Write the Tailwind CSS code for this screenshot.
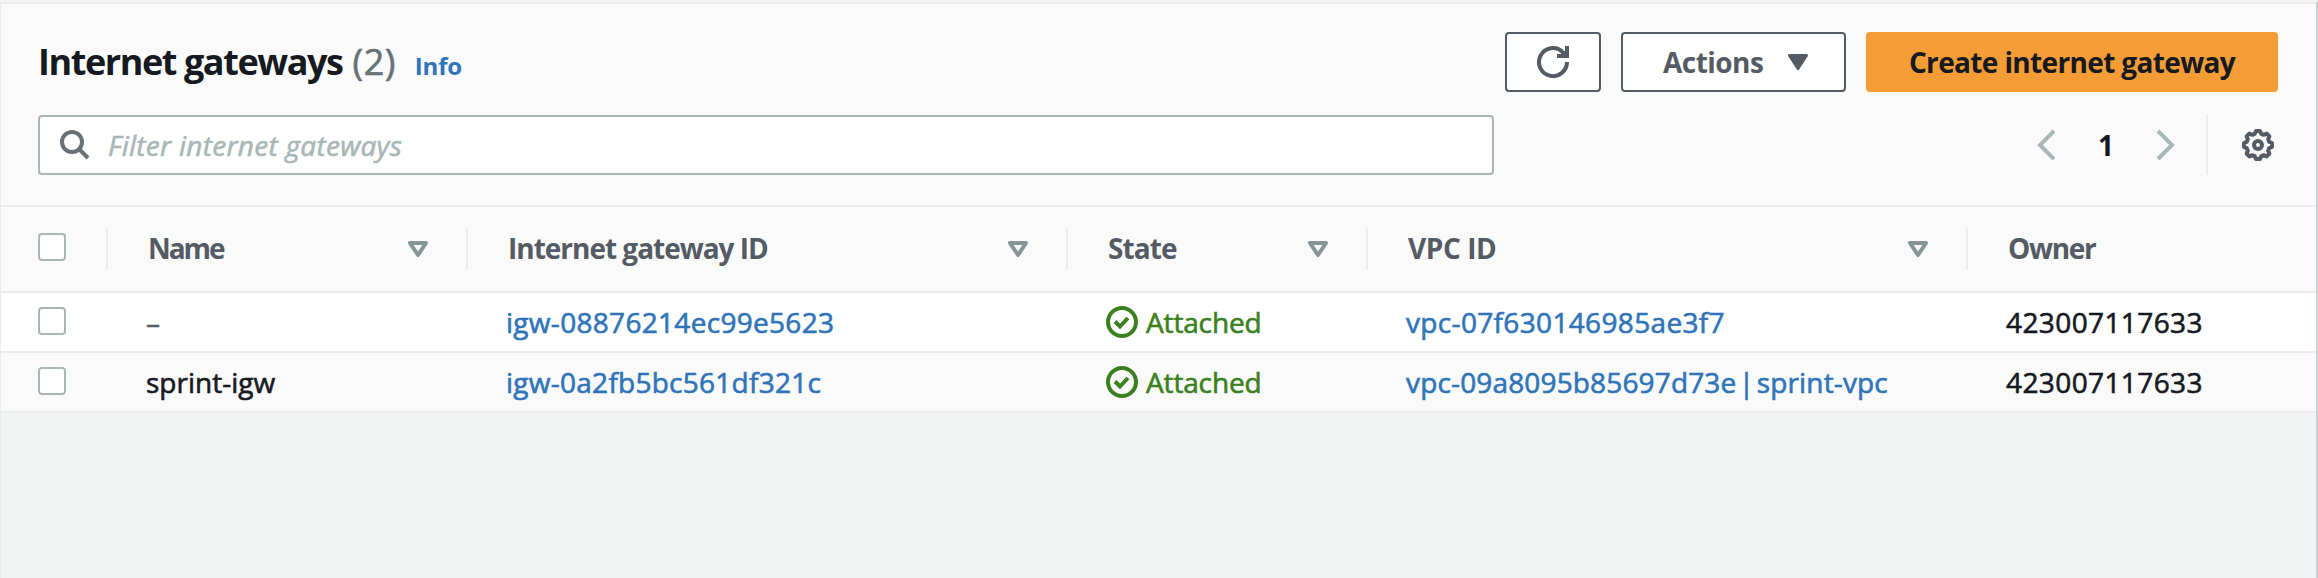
<!DOCTYPE html>
<html lang="en">
<head>
<meta charset="utf-8">
<title>Internet gateways</title>
<script src="https://cdn.jsdelivr.net/npm/@tailwindcss/browser@4"></script>
</head>
<body class="h-[578px] overflow-hidden bg-[#f2f3f3] pt-0.5 font-['Open_Sans',sans-serif] text-[28px] leading-[40px] text-[#16191f]">
<svg class="hidden">
  <symbol id="sort" viewBox="0 0 20 16"><path d="M2 2h16l-8 12z" fill="none" stroke="currentColor" stroke-width="4" stroke-linejoin="round"/></symbol>
  <symbol id="ok" viewBox="0 0 32 32"><circle cx="16" cy="16" r="14" fill="none" stroke="currentColor" stroke-width="4"/><path d="M9 15.500l5 5 8-8.500" fill="none" stroke="currentColor" stroke-width="4"/></symbol>
</svg>
<div class="flex h-[576px] flex-col border-r-2 border-l border-r-[#c9d0d1] border-l-[#eaeded]">
  <header class="flex h-[205px] flex-col border-y-2 border-[#eaeded] bg-[#fafafa] pr-[38px] pl-[37px]">
    <div class="mt-7 flex h-[60px] items-center justify-between">
      <div class="-mt-px flex items-baseline">
        <h1 class="text-[36px] leading-[44px] font-bold tracking-[-1.42px]">Internet gateways</h1>
        <span class="ml-[10px] text-[36px] leading-[44px] tracking-[0.5px] text-[#687078] [-webkit-text-stroke:0.6px]">(2)</span>
        <a class="ml-[19px] text-2xl font-bold tracking-[-0.2px] text-[#2f74b9]">Info</a>
      </div>
      <div class="flex gap-5 font-bold">
        <button class="flex h-[60px] w-24 items-center justify-center rounded-[4px] border-2 border-[#545b64] bg-white text-[#545b64]">
          <svg class="h-8 w-8" viewBox="0 0 32 32" fill="none" stroke="currentColor" stroke-width="4"><path d="M30 16a14 14 0 1 1-4.500-10.200"/><path d="M30 0v10H20" /><path d="M24 5h5v5h-5z" fill="currentColor" stroke="none"/></svg>
        </button>
        <button class="flex h-[60px] w-[225px] items-center rounded-[4px] border-2 border-[#545b64] bg-white pl-10 text-[#545b64]">
          <span class="tracking-[-0.53px]">Actions</span>
          <svg class="ml-[25px] h-4 w-5" viewBox="0 0 20 16"><path d="M1.500 1.500h17L10 14.500z" fill="currentColor" stroke="currentColor" stroke-width="3" stroke-linejoin="round"/></svg>
        </button>
        <button class="flex h-[60px] w-[412px] items-center justify-center rounded-[4px] bg-[#f49d37] tracking-[-0.64px]">Create internet gateway</button>
      </div>
    </div>
    <div class="mt-[23px] flex h-[60px] items-center">
      <div class="flex h-[60px] w-[1456px] items-center rounded-[4px] border-2 border-[#aab7b8] bg-white pl-5">
        <svg class="h-[30px] w-[30px] text-[#687078]" viewBox="0 0 30 30" fill="none" stroke="currentColor" stroke-width="4"><circle cx="12" cy="12" r="10"/><path d="M19 19l9 9"/></svg>
        <span class="ml-[18px] tracking-[0.28px] text-[#aab7b8] italic [-webkit-text-stroke:0.6px]">Filter internet gateways</span>
      </div>
      <svg class="ml-auto h-8 w-[19px] text-[#aab7b8]" viewBox="0 0 19 32" fill="none" stroke="currentColor" stroke-width="4"><path d="M18 2L4 16l14 14"/></svg>
      <span class="w-[101px] pl-px text-center font-bold">1</span>
      <svg class="h-8 w-[19px] text-[#aab7b8]" viewBox="0 0 19 32" fill="none" stroke="currentColor" stroke-width="4"><path d="M2 2l14 14L2 30"/></svg>
      <div class="ml-[31px] h-[60px] w-0.5 bg-[#eaeded]"></div>
      <svg class="mr-1 ml-[34px] h-8 w-8 text-[#545b64]" viewBox="0 0 32 32" fill="none" stroke="currentColor" stroke-width="4" stroke-linejoin="round"><circle cx="16" cy="16" r="4"/><path d="M14 2h4l1.200 2.800 2.500 1 3-1.200 2.700 2.700-1.200 3 1 2.500L30 14v4l-2.800 1.200-1 2.500 1.200 3-2.700 2.700-3-1.200-2.500 1L18 30h-4l-1.200-2.800-2.500-1-3 1.200-2.700-2.700 1.200-3-1-2.500L2 18v-4l2.800-1.200 1-2.500-1.200-3 2.700-2.700 3 1.200 2.500-1z"/></svg>
    </div>
  </header>

  <div class="flex h-[86px] shrink-0 items-center border-b-2 border-[#eaeded] bg-[#fafafa] font-bold text-[#545b64]">
    <div class="flex h-[42px] w-[107px] items-center border-r-2 border-[#eaeded] pl-[37px]"><i class="-mt-1 h-7 w-7 rounded-[4px] border-2 border-[#aab7b8] bg-white"></i></div>
    <div class="flex h-[42px] w-[360px] items-center justify-between border-r-2 border-[#eaeded] pr-[38px] pl-10"><span class="-mt-0.5 tracking-[-2.060px]">Name</span><svg class="h-4 w-5 text-[#879596]"><use href="#sort"/></svg></div>
    <div class="flex h-[42px] w-[600px] items-center justify-between border-r-2 border-[#eaeded] pr-[38px] pl-10"><span class="-mt-0.5 tracking-[-1.010px]">Internet gateway ID</span><svg class="h-4 w-5 text-[#879596]"><use href="#sort"/></svg></div>
    <div class="flex h-[42px] w-[300px] items-center justify-between border-r-2 border-[#eaeded] pr-[38px] pl-10"><span class="-mt-0.5 tracking-[-0.910px]">State</span><svg class="h-4 w-5 text-[#879596]"><use href="#sort"/></svg></div>
    <div class="flex h-[42px] w-[600px] items-center justify-between border-r-2 border-[#eaeded] pr-[38px] pl-10"><span class="-mt-0.5 tracking-[-0.430px]">VPC ID</span><svg class="h-4 w-5 text-[#879596]"><use href="#sort"/></svg></div>
    <div class="-mt-0.5 pl-10 tracking-[-1.300px]">Owner</div>
  </div>

  <div class="flex h-[60px] shrink-0 items-center border-b-2 border-[#eaeded] bg-white [-webkit-text-stroke:0.6px]">
    <div class="w-[107px] pl-[37px]"><i class="-mt-0.5 block h-7 w-7 rounded-[4px] border-2 border-[#aab7b8] bg-white"></i></div>
    <div class="w-[360px] pl-[38px] text-[#545b64]">–</div>
    <div class="w-[600px] pl-[38px] tracking-[0.3px] text-[#2f74b9]">igw-08876214ec99e5623</div>
    <div class="flex w-[300px] items-center gap-2 pl-[38px] tracking-[-0.150px] text-[#3a8020]"><svg class="h-8 w-8"><use href="#ok"/></svg>Attached</div>
    <div class="w-[600px] pl-[38px] tracking-[0.34px] text-[#2f74b9]">vpc-07f630146985ae3f7</div>
    <div class="pl-[38px] tracking-[0.4px]">423007117633</div>
  </div>
  <div class="flex h-[60px] shrink-0 items-center border-b-2 border-[#eaeded] bg-[#fafafa] [-webkit-text-stroke:0.6px]">
    <div class="w-[107px] pl-[37px]"><i class="-mt-0.5 block h-7 w-7 rounded-[4px] border-2 border-[#aab7b8] bg-white"></i></div>
    <div class="w-[360px] pl-[38px]">sprint-igw</div>
    <div class="w-[600px] pl-[38px] tracking-[0.26px] text-[#2f74b9]">igw-0a2fb5bc561df321c</div>
    <div class="flex w-[300px] items-center gap-2 pl-[38px] tracking-[-0.150px] text-[#3a8020]"><svg class="h-8 w-8"><use href="#ok"/></svg>Attached</div>
    <div class="w-[600px] pl-[38px] tracking-[0.15px] text-[#2f74b9] [word-spacing:-5px]">vpc-09a8095b85697d73e | sprint-vpc</div>
    <div class="pl-[38px] tracking-[0.4px]">423007117633</div>
  </div>
</div>
</body>
</html>
